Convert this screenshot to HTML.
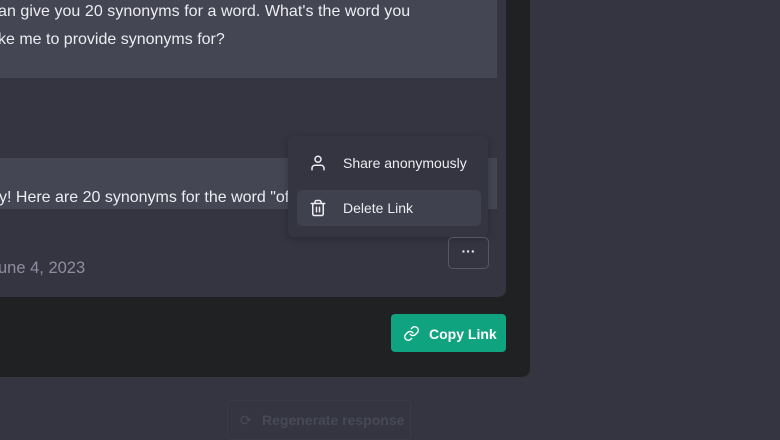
<!DOCTYPE html>
<html><head><style>
*{margin:0;padding:0;box-sizing:border-box}
body{width:780px;height:438px;overflow:hidden;background:#353541;font-family:"Liberation Sans",sans-serif;position:relative}
.abs{position:absolute}
.modal{left:-20px;top:-20px;width:550px;height:397px;background:#202123;border-radius:8px}
.card{left:-20px;top:-20px;width:526px;height:317px;background:#343541;border-radius:8px;overflow:hidden}
.b1{left:0;top:0;width:497px;height:78px;background:#444654}
.b2{left:0;top:158px;width:497px;height:51px;background:#444654}
.t{color:#ececf1;font-size:16px;white-space:nowrap}
.menu{left:288px;top:136px;width:200px;height:101px;background:#343541;border-radius:6px;box-shadow:0 2px 8px rgba(0,0,0,.25)}
.hov{left:297px;top:190px;width:184px;height:36px;background:#40414f;border-radius:5px}
.dots{left:448px;top:237px;width:41px;height:32px;border:1px solid #565869;border-radius:5px;color:#ececf1;font-size:14px;text-align:center;line-height:26px;font-weight:bold}
.copy{left:391px;top:314px;width:115px;height:38px;background:#10a37f;border-radius:4px;color:#fff;font-size:14px}
.regen{left:227px;top:400px;width:184px;height:40px;border:1px solid #3a3b46;border-radius:4px;color:#484957;font-size:14px}
</style></head><body>
<div class="abs modal"></div>
<div class="abs card"></div>
<div class="abs b1"></div>
<div class="abs t" style="left:-2px;top:3px;letter-spacing:0.05px">an give you 20 synonyms for a word. What's the word you</div>
<div class="abs t" style="left:-2px;top:31px">ke me to provide synonyms for?</div>
<div class="abs b2"></div>
<div class="abs t" style="left:-1px;top:189px">y! Here are 20 synonyms for the word "of</div>
<div class="abs t" style="left:-2px;top:259px;color:#8e8ea0;font-size:16.5px">une 4, 2023</div>
<div class="abs menu"></div>
<div class="abs hov"></div>
<svg class="abs" style="left:309px;top:154px" width="18" height="18" viewBox="0 0 24 24" fill="none" stroke="#ececf1" stroke-width="2" stroke-linecap="round"><path d="M20 21v-2a4 4 0 0 0-4-4H8a4 4 0 0 0-4 4v2"/><circle cx="12" cy="7" r="4"/></svg>
<div class="abs t" style="left:343px;top:155px;font-size:14px">Share anonymously</div>
<svg class="abs" style="left:309px;top:199px" width="18" height="18" viewBox="0 0 24 24" fill="none" stroke="#ececf1" stroke-width="2" stroke-linecap="round"><path d="M3 6h18M19 6v14a2 2 0 0 1-2 2H7a2 2 0 0 1-2-2V6m3 0V4a2 2 0 0 1 2-2h4a2 2 0 0 1 2 2v2M10 11v6M14 11v6"/></svg>
<div class="abs t" style="left:343px;top:200px;font-size:14px">Delete Link</div>
<div class="abs dots">···</div>
<div class="abs copy"><svg class="abs" style="left:12px;top:11px" width="17" height="17" viewBox="0 0 24 24" fill="none" stroke="#fff" stroke-width="2" stroke-linecap="round"><path d="M10 13a5 5 0 0 0 7.5.5l3-3a5 5 0 0 0-7-7l-1.7 1.7"/><path d="M14 11a5 5 0 0 0-7.5-.5l-3 3a5 5 0 0 0 7 7l1.7-1.7"/></svg><span class="abs" style="left:38px;top:12px;font-weight:bold">Copy Link</span></div>
<div class="abs regen"><span class="abs" style="left:12px;top:11px">⟳</span><span class="abs" style="left:34px;top:11px;font-weight:bold">Regenerate response</span></div>
</body></html>
